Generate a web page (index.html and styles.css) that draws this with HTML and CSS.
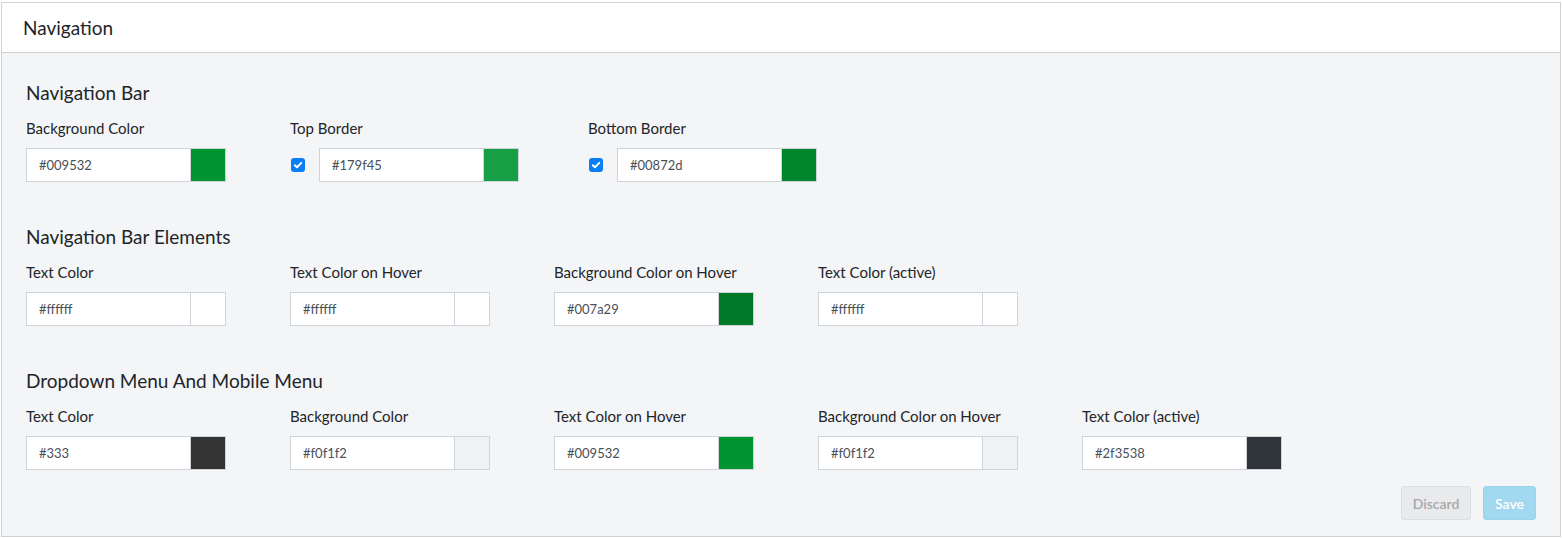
FILE: index.html
```html
<!DOCTYPE html>
<html>
<head>
<meta charset="utf-8">
<link rel="stylesheet" href="styles.css">
</head>
<body>
<div class="card">
  <div class="card-header">Navigation</div>
  <div class="card-body">
    <section class="section">
      <h2 class="section-title">Navigation Bar</h2>
      <div class="row row-first">
        <div class="field">
          <label class="field-label">Background Color</label>
          <div class="color-input"><span class="color-text">#009532</span><span class="swatch" style="background:#009532"></span></div>
        </div>
        <div class="field field-check">
          <label class="field-label">Top Border</label>
          <div class="check-row">
            <span class="checkbox"><svg viewBox="0 0 14 14" width="14" height="14"><path d="M3.8 7.3 L6 9.3 L10.3 4.9" fill="none" stroke="#fff" stroke-width="2" stroke-linecap="round" stroke-linejoin="round"/></svg></span>
            <div class="color-input"><span class="color-text">#179f45</span><span class="swatch" style="background:#179f45"></span></div>
          </div>
        </div>
        <div class="field field-check">
          <label class="field-label">Bottom Border</label>
          <div class="check-row">
            <span class="checkbox"><svg viewBox="0 0 14 14" width="14" height="14"><path d="M3.8 7.3 L6 9.3 L10.3 4.9" fill="none" stroke="#fff" stroke-width="2" stroke-linecap="round" stroke-linejoin="round"/></svg></span>
            <div class="color-input"><span class="color-text">#00872d</span><span class="swatch" style="background:#00872d"></span></div>
          </div>
        </div>
      </div>
    </section>

    <section class="section">
      <h2 class="section-title">Navigation Bar Elements</h2>
      <div class="row">
        <div class="field">
          <label class="field-label">Text Color</label>
          <div class="color-input"><span class="color-text">#ffffff</span><span class="swatch" style="background:#ffffff"></span></div>
        </div>
        <div class="field">
          <label class="field-label">Text Color on Hover</label>
          <div class="color-input"><span class="color-text">#ffffff</span><span class="swatch" style="background:#ffffff"></span></div>
        </div>
        <div class="field">
          <label class="field-label">Background Color on Hover</label>
          <div class="color-input"><span class="color-text">#007a29</span><span class="swatch" style="background:#007a29"></span></div>
        </div>
        <div class="field">
          <label class="field-label">Text Color (active)</label>
          <div class="color-input"><span class="color-text">#ffffff</span><span class="swatch" style="background:#ffffff"></span></div>
        </div>
      </div>
    </section>

    <section class="section section-last">
      <h2 class="section-title">Dropdown Menu And Mobile Menu</h2>
      <div class="row">
        <div class="field">
          <label class="field-label">Text Color</label>
          <div class="color-input"><span class="color-text">#333</span><span class="swatch" style="background:#333333"></span></div>
        </div>
        <div class="field">
          <label class="field-label">Background Color</label>
          <div class="color-input"><span class="color-text">#f0f1f2</span><span class="swatch" style="background:#f0f1f2"></span></div>
        </div>
        <div class="field">
          <label class="field-label">Text Color on Hover</label>
          <div class="color-input"><span class="color-text">#009532</span><span class="swatch" style="background:#009532"></span></div>
        </div>
        <div class="field">
          <label class="field-label">Background Color on Hover</label>
          <div class="color-input"><span class="color-text">#f0f1f2</span><span class="swatch" style="background:#f0f1f2"></span></div>
        </div>
        <div class="field">
          <label class="field-label">Text Color (active)</label>
          <div class="color-input"><span class="color-text">#2f3538</span><span class="swatch" style="background:#2f3538"></span></div>
        </div>
      </div>
    </section>

    <div class="actions">
      <button class="btn btn-discard">Discard</button>
      <button class="btn btn-save">Save</button>
    </div>
  </div>
</div>
</body>
</html>
```
FILE: styles.css
```css
* { box-sizing: border-box; }
html, body { margin: 0; padding: 0; background: #fff; }
body {
  font-family: "Lato", "Noto Sans", sans-serif;
  color: #212529;
  padding: 2px 1px 1px 1px;
}
.card {
  width: 1560px;
  height: 535px;
  border: 1px solid #cfd1d4;
  background: #f4f5f7;
  display: flex;
  flex-direction: column;
}
.card-header {
  height: 50px;
  background: #fff;
  border-bottom: 1px solid #cfd1d4;
  padding: 0 21px;
  font-size: 19px;
  line-height: 49px;
  color: #212529;
}
.card-body {
  flex: 1;
  padding: 28px 24px 0 24px;
  display: flex;
  flex-direction: column;
}
.section { margin-bottom: 43px; }
.section-last { margin-bottom: 0; }
.section-title {
  margin: 0 0 14px 0;
  font-weight: 400;
  font-size: 19px;
  line-height: 24px;
  color: #212529;
}
.row { display: flex; gap: 64px; }
.row-first .field-check + .field-check { margin-left: 5px; }
.field { display: flex; flex-direction: column; }
.field-label {
  font-size: 15px;
  line-height: 18px;
  margin-bottom: 11px;
  color: #212529;
}
.check-row { display: flex; align-items: center; }
.checkbox {
  width: 14px;
  height: 14px;
  border-radius: 3px;
  background: #0a7ff5;
  margin: 0 14px 0 1px;
  display: flex;
}
.color-input {
  width: 200px;
  height: 34px;
  display: flex;
  border: 1px solid #ced4da;
  background: #fff;
}
.color-text {
  flex: 1;
  font-size: 13px;
  line-height: 32px;
  padding-left: 12px;
  color: #495057;
  border-right: 1px solid #ced4da;
}
.swatch { width: 34px; height: 32px; }
.actions {
  margin-top: 16px;
  display: flex;
  justify-content: flex-end;
  gap: 12px;
}
.btn {
  height: 34px;
  border-radius: 3px;
  font-family: inherit;
  font-size: 14px;
  font-weight: 600;
  padding: 0;
}
.btn-discard {
  background: #e9eaeb;
  border: 1px solid #dcdddf;
  color: #a7a8aa;
  width: 70px;
}
.btn-save {
  background: #a3d9f0;
  border: 1px solid #9ad4ed;
  color: #fff;
  width: 53px;
}
```
